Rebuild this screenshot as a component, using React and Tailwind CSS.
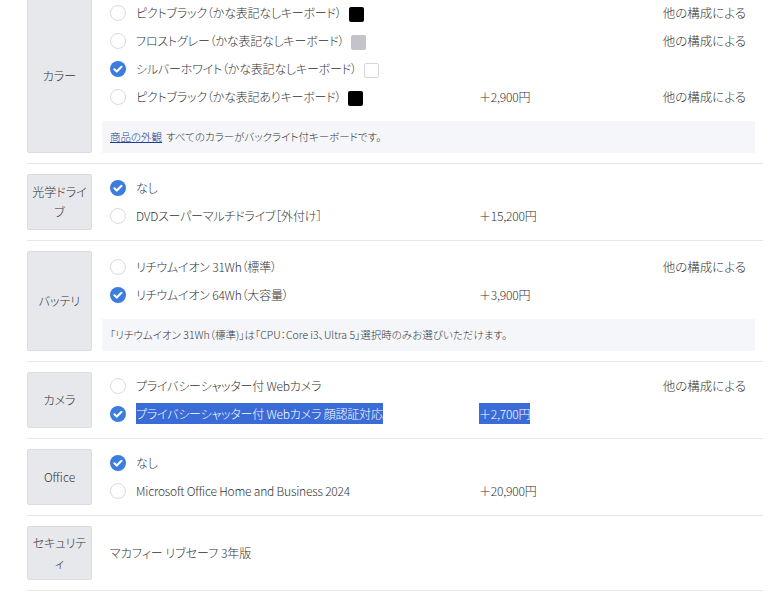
const FONT = "font-['Meiryo','Noto_Sans_CJK_JP',sans-serif]";

function Radio({checked}) {
    if (checked) {
        return (
            <svg width="16" height="16" viewBox="0 0 16 16" className="shrink-0">
                <circle cx="8" cy="8" r="8" fill="#3b7ddd"/>
                <path d="M4.4 8.3l2.4 2.3 4.7-4.8" stroke="#fff" strokeWidth="2.1" fill="none" strokeLinecap="round" strokeLinejoin="round"/>
            </svg>
        );
    }
    return <span className="w-[16px] h-[16px] rounded-full border border-[#dcdcdc] bg-white shrink-0"/>;
}

function Swatch({color}) {
    if (color === 'white') return <span className="inline-block w-[15px] h-[15px] ml-[7px] rounded-[2px] border border-[#d6d6d6] bg-white align-middle"/>;
    if (color === 'gray') return <span className="inline-block w-[15px] h-[15px] ml-[7px] rounded-[2px] bg-[#c3c3c9] align-middle"/>;
    return <span className="inline-block w-[15px] h-[15px] ml-[7px] rounded-[2px] bg-black align-middle"/>;
}

function Option({name, checked, swatch, price, other, selected}) {
    return (
        <div className="grid grid-cols-[369px_1fr_auto] items-center h-[28px] pl-2 pr-[9px]">
            <div className="flex items-center gap-[10px]">
                <Radio checked={checked}/>
                <span className="whitespace-nowrap tracking-[-0.2px]">
                    <span className={selected ? 'bg-[#3a6bd6] text-white py-[2px]' : ''}>{name}</span>
                    {swatch && <Swatch color={swatch}/>}
                </span>
            </div>
            <div className="whitespace-nowrap tracking-[-0.2px]">
                {price && <span className={selected ? 'bg-[#3a6bd6] text-white py-[2px]' : ''}>{price}</span>}
            </div>
            <div className="text-right whitespace-nowrap text-[12.5px]">{other}</div>
        </div>
    );
}

function Note({children}) {
    return (
        <div className="mt-[10px] h-[32px] flex items-center pl-2 bg-[#f5f6f9] text-[10.5px] whitespace-nowrap">
            {children}
        </div>
    );
}

function Section({label, children, minH = 'min-h-[55px]'}) {
    return (
        <div className="flex items-stretch py-[10px] border-b border-[#e8e8e8]">
            <div className={`w-[65px] shrink-0 ${minH} flex items-center justify-center text-center px-[2px] text-[12px] leading-[20px] bg-[#e6e8ec] border border-[#d9dce1] rounded-[2px]`}>
                {label}
            </div>
            <div className="flex-1 ml-[10px] mr-[8px]">
                {children}
            </div>
        </div>
    );
}

const other = '他の構成による';

export default function App() {
    return (
        <div className={`w-[780px] h-[594px] overflow-hidden bg-white text-[#333] text-[12px] font-light ${FONT} [font-feature-settings:'palt']`}>
            <div className="ml-[27px] w-[736px] -mt-[11px]">
                <Section label="カラー">
                    <Option name="ピクトブラック（かな表記なしキーボード）" swatch="black" other={other}/>
                    <Option name="フロストグレー（かな表記なしキーボード）" swatch="gray" other={other}/>
                    <Option name="シルバーホワイト（かな表記なしキーボード）" swatch="white" checked/>
                    <Option name="ピクトブラック（かな表記ありキーボード）" swatch="black" price="＋2,900円" other={other}/>
                    <Note>
                        <a href="#" className="text-[#1d3f8f] underline">商品の外観</a>
                        <span className="ml-[4px]">すべてのカラーがバックライト付キーボードです。</span>
                    </Note>
                </Section>
                <Section label="光学ドライブ">
                    <Option name="なし" checked/>
                    <Option name="DVDスーパーマルチドライブ［外付け］" price="＋15,200円"/>
                </Section>
                <Section label="バッテリ">
                    <div className="pt-[2px]">
                        <Option name="リチウムイオン 31Wh（標準）" other={other}/>
                        <Option name="リチウムイオン 64Wh（大容量）" checked price="＋3,900円"/>
                        <Note>「リチウムイオン 31Wh（標準)」は「CPU：Core i3、Ultra 5」選択時のみお選びいただけます。</Note>
                    </div>
                </Section>
                <Section label="カメラ">
                    <Option name="プライバシーシャッター付 Webカメラ" other={other}/>
                    <Option name="プライバシーシャッター付 Webカメラ 顔認証対応" checked price="＋2,700円" selected/>
                </Section>
                <Section label="Office" minH="min-h-[56px]">
                    <Option name="なし" checked/>
                    <Option name="Microsoft Office Home and Business 2024" price="＋20,900円"/>
                </Section>
                <Section label="セキュリティ" minH="min-h-[54px]">
                    <div className="h-full flex items-center pl-2">マカフィー リブセーフ 3年版</div>
                </Section>
            </div>
        </div>
    );
}
